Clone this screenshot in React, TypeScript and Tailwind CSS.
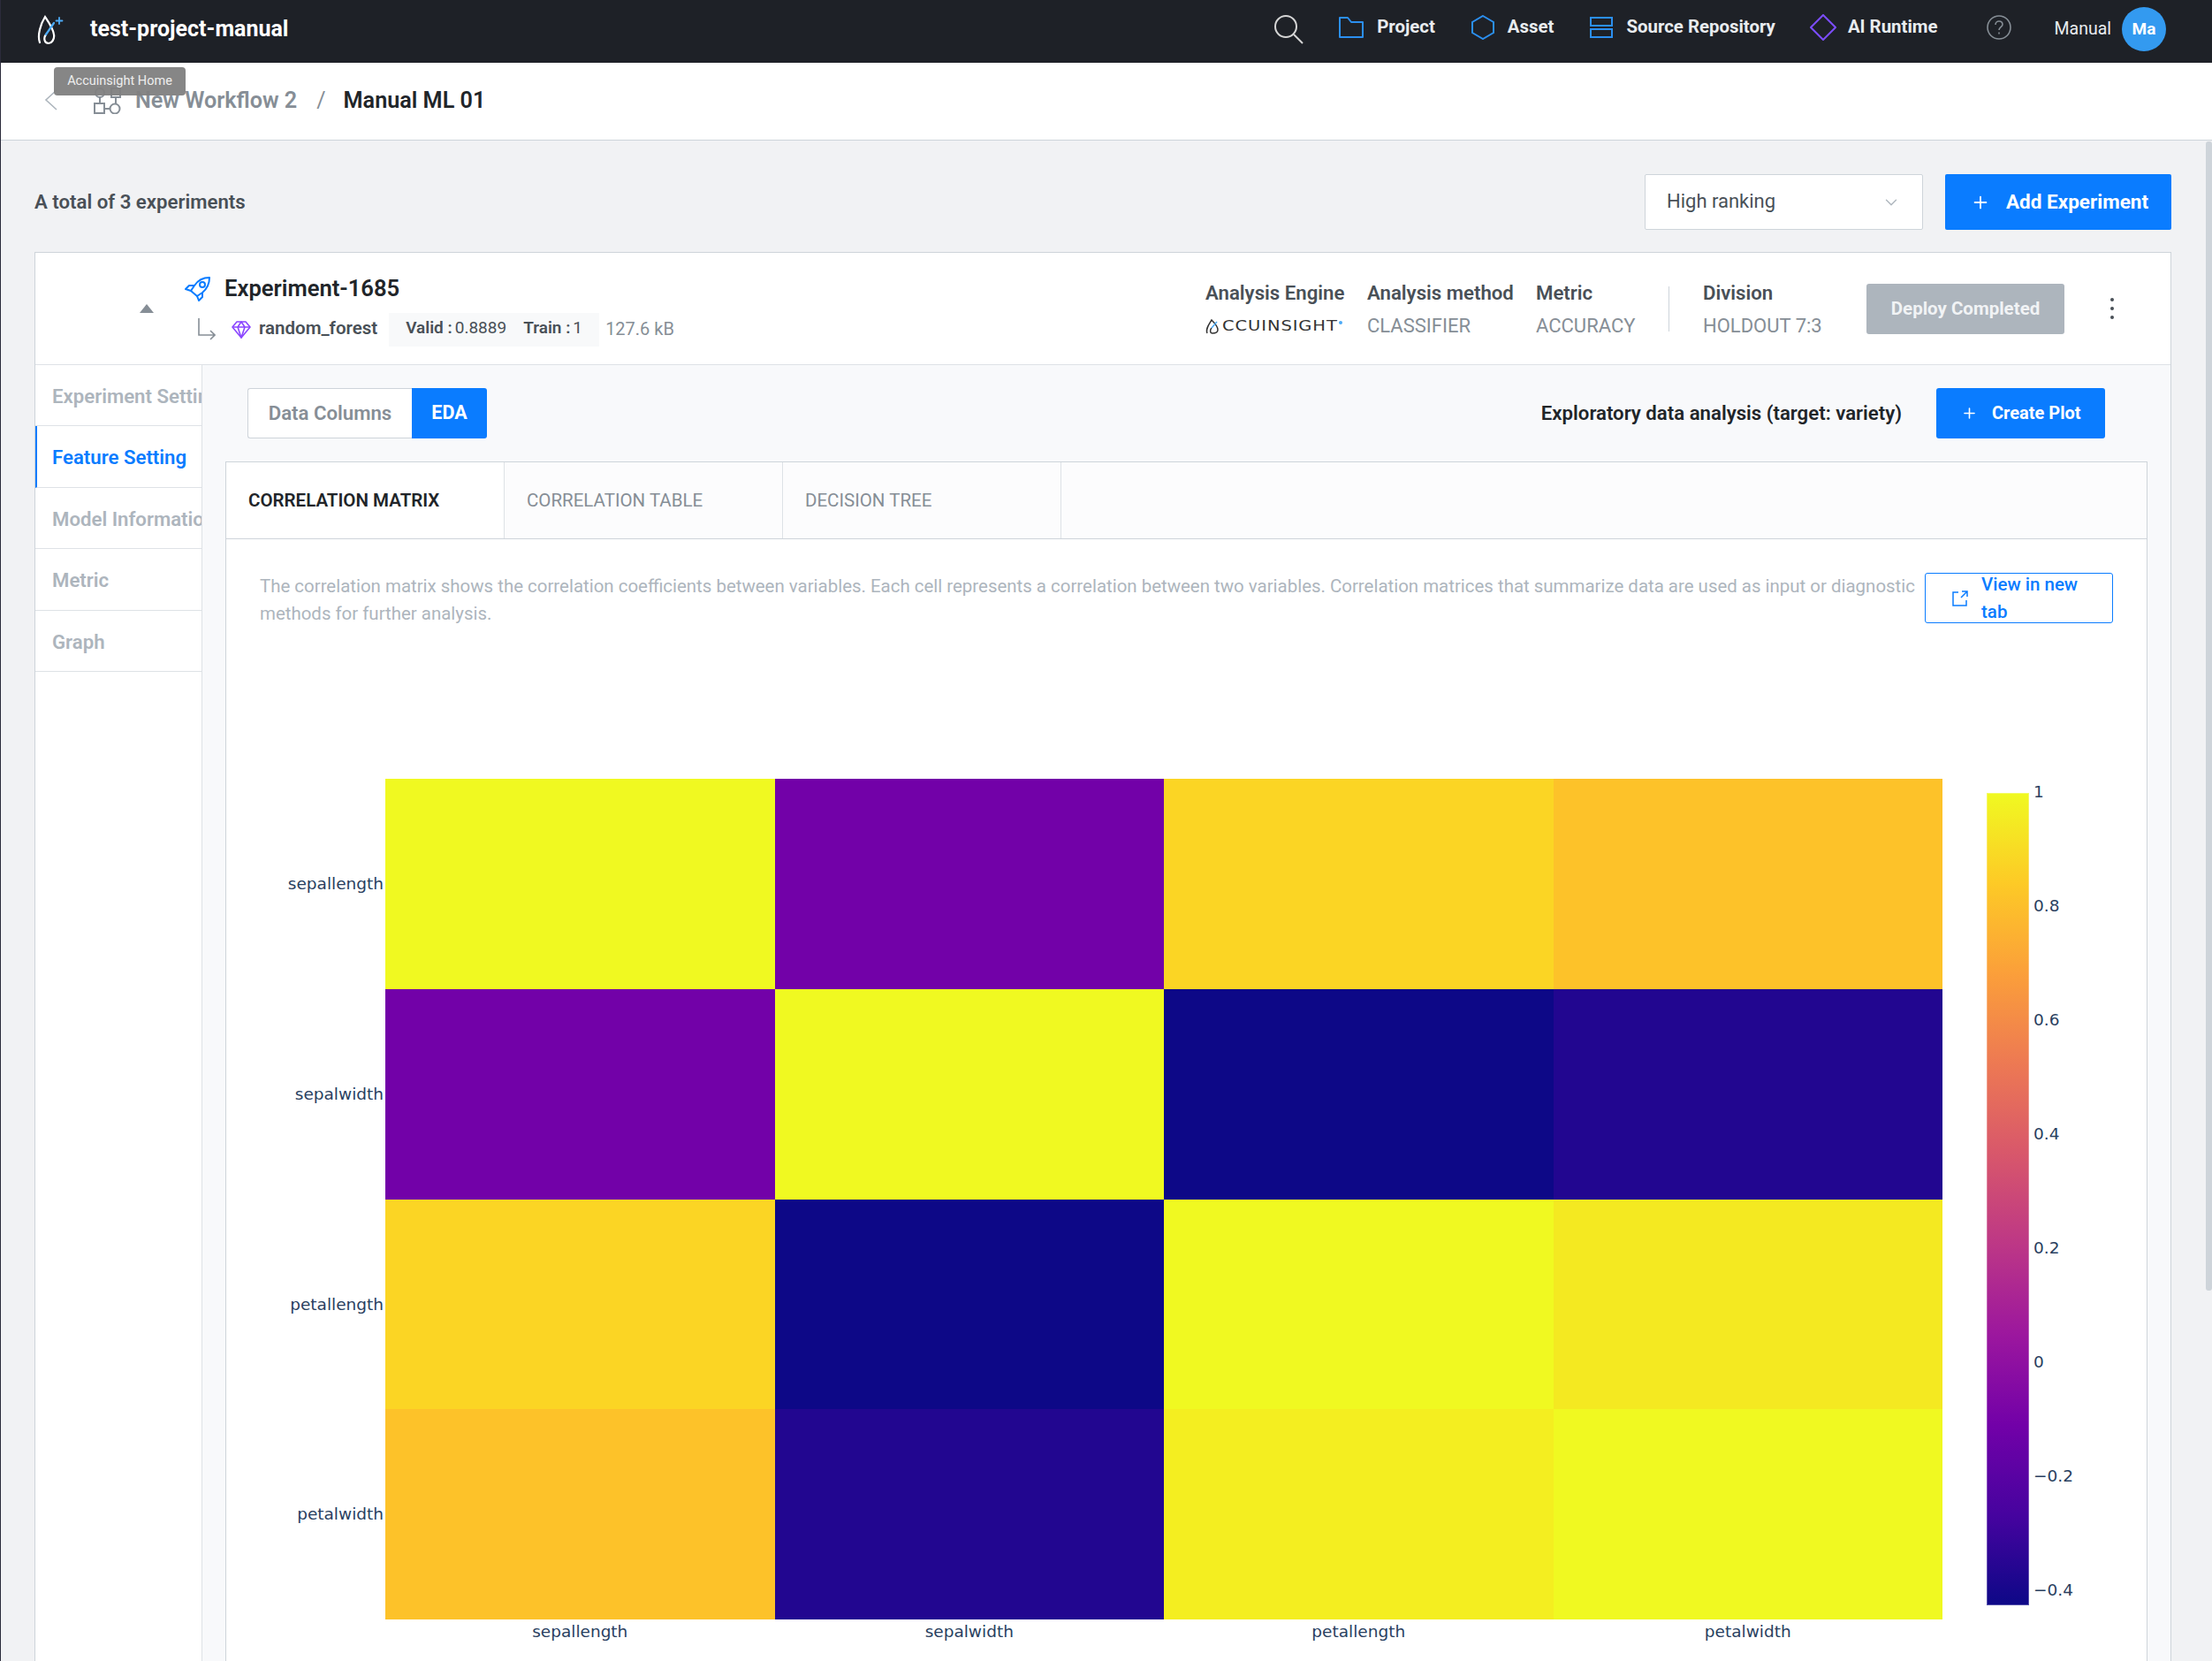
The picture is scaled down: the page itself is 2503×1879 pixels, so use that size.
import { ChevronDown, Plus } from 'lucide-react'

const labels = ['sepallength', 'sepalwidth', 'petallength', 'petalwidth']

const cells = [
  'bg-[#f0f921]', 'bg-[#7201a8]', 'bg-[#fbd524]', 'bg-[#fdc229]',
  'bg-[#7201a8]', 'bg-[#f0f921]', 'bg-[#0d0887]', 'bg-[#220690]',
  'bg-[#fbd524]', 'bg-[#0d0887]', 'bg-[#f0f921]', 'bg-[#f4e921]',
  'bg-[#fdc229]', 'bg-[#220690]', 'bg-[#f4ee20]', 'bg-[#f0f921]',
]

const ticks = ['1', '0.8', '0.6', '0.4', '0.2', '0', '−0.2', '−0.4']

const sideItems = [
  { name: 'Experiment Setting', active: false },
  { name: 'Feature Setting', active: true },
  { name: 'Model Information', active: false },
  { name: 'Metric', active: false },
  { name: 'Graph', active: false },
]

function Logo() {
  return (
    <svg width="32" height="34" viewBox="0 0 32 34" fill="none" strokeWidth="2.2" strokeLinecap="round">
      <path d="M3 31C0 23 4 10 9 2C13 8 18 15 19 22C20 28 16 32 13 32C8 32 7 26 10 22" stroke="#fff" />
      <path d="M10 22L19 9" stroke="#4dabf7" />
      <path d="M25 3V10M21.5 6.5H28.5" stroke="#4dabf7" strokeWidth="1.8" />
    </svg>
  )
}

function NavItem({ icon, label, iconGap }: { icon: React.ReactNode; label: string; iconGap: string }) {
  return (
    <div className={`flex items-center ${iconGap}`}>
      {icon}
      <span className="text-[20.4px] font-bold text-[#e9ecef] -mt-[2px]">{label}</span>
    </div>
  )
}

function TopBar() {
  return (
    <header className="h-[71px] shrink-0 bg-[#1e2127] flex items-center">
      <div className="ml-[41px] -mt-[4px]">
        <Logo />
      </div>
      <span className="ml-[28px] -mt-[6px] text-[25px] font-bold text-white">test-project-manual</span>
      <div className="ml-auto flex items-center">
        <svg className="-mt-[4px]" width="36" height="36" viewBox="0 0 36 36" fill="none" stroke="#d5d5d5" strokeWidth="2">
          <circle cx="14" cy="14" r="12" />
          <path d="M23 23L33 33" />
        </svg>
        <div className="ml-[38px] -mt-[9px]">
          <NavItem
            iconGap="gap-[15px]"
            label="Project"
            icon={
              <svg width="28" height="24" viewBox="0 0 28 24" fill="none" stroke="#2b8ff0" strokeWidth="2">
                <path d="M1 1H10L14 6H27V23H1Z" strokeLinejoin="round" />
              </svg>
            }
          />
        </div>
        <div className="ml-[41px] -mt-[9px]">
          <NavItem
            iconGap="gap-[15px]"
            label="Asset"
            icon={
              <svg width="26" height="28" viewBox="0 0 26 28" fill="none" stroke="#2b8ff0" strokeWidth="2">
                <path d="M13 1L25 8V20L13 27L1 20V8Z" />
              </svg>
            }
          />
        </div>
        <div className="ml-[41px] -mt-[9px]">
          <NavItem
            iconGap="gap-[15px]"
            label="Source Repository"
            icon={
              <svg width="26" height="24" viewBox="0 0 26 24" fill="none" stroke="#2b8ff0" strokeWidth="2">
                <rect x="1" y="1" width="24" height="9" />
                <rect x="1" y="14" width="24" height="9" />
              </svg>
            }
          />
        </div>
        <div className="ml-[39px] -mt-[9px]">
          <NavItem
            iconGap="gap-[13px]"
            label="AI Runtime"
            icon={
              <svg width="30" height="30" viewBox="0 0 30 30" fill="none" stroke="#7c4dff" strokeWidth="2">
                <path d="M15 1L29 15L15 29L1 15Z" />
              </svg>
            }
          />
        </div>
        <svg className="ml-[55px] -mt-[9px]" width="28" height="28" viewBox="0 0 28 28" fill="none" stroke="#868e96" strokeWidth="1.6">
          <circle cx="14" cy="14" r="13" />
          <path d="M10 11C10 8.5 12 7 14 7C16.5 7 18 8.7 18 10.7C18 13.5 14 14 14 17" />
          <path d="M14 19.5V21.5" />
        </svg>
        <span className="ml-[49px] -mt-[6px] text-[19.5px] text-[#e9ecef]">Manual</span>
        <div className="ml-[12px] mr-[52px] -mt-[5px] w-[50px] h-[50px] rounded-full bg-[#339af0] flex items-center justify-center text-[19px] font-bold text-white">
          Ma
        </div>
      </div>
    </header>
  )
}

function Breadcrumb() {
  return (
    <div className="h-[88px] shrink-0 bg-white border-b border-[#ced4da] flex items-center relative">
      <svg className="ml-[49px] -mt-[3px]" width="15" height="24" viewBox="0 0 15 24" fill="none" stroke="#adb5bd" strokeWidth="1.6">
        <path d="M14 1L2 12L14 23" />
      </svg>
      <svg className="ml-[41px] -mt-[1px]" width="31" height="30" viewBox="0 0 31 30" fill="none" stroke="#868e96" strokeWidth="2">
        <circle cx="7" cy="6" r="5" />
        <rect x="20" y="1" width="10" height="10" />
        <rect x="1" y="18" width="11" height="11" />
        <circle cx="24" cy="24" r="5.5" />
        <path d="M7 11V18M25 11V18M12 24H18" />
      </svg>
      <span className="ml-[16px] -mt-[1px] text-[25.2px] font-semibold text-[#868e96]">New Workflow 2</span>
      <span className="ml-[22px] -mt-[1px] text-[25px] text-[#868e96]">/</span>
      <span className="ml-[20px] -mt-[1px] text-[25.2px] font-semibold text-[#212529]">Manual ML 01</span>
      <div className="absolute left-[60px] top-[5px] w-[149px] h-[32px] rounded-[4px] bg-[#7f7f7f]/95 flex items-center justify-center text-[14.5px] text-[#eeeeee]">
        Accuinsight Home
      </div>
    </div>
  )
}

function MetaColumn({ title, value, className }: { title: string; value: string; className: string }) {
  return (
    <div className={`mt-[2px] ${className}`}>
      <div className="text-[22.2px] font-semibold text-[#495057] leading-[30px]">{title}</div>
      <div className="mt-[8px] text-[22px] text-[#868e96] leading-[30px]">{value}</div>
    </div>
  )
}

function ExperimentHeader() {
  return (
    <div className="h-[127px] shrink-0 border-b border-[#dee2e6] flex items-center">
      <div className="ml-[118px] w-0 h-0 border-x-[8px] border-x-transparent border-b-[10px] border-b-[#868e96]" />
      <div className="ml-[35px] flex flex-col">
        <div className="flex items-center h-[40px]">
          <svg width="32" height="30" viewBox="0 0 32 30" fill="none" stroke="#0a7cff" strokeWidth="2" strokeLinejoin="round">
            <path d="M28 2C22 2 15 5 11 11L7 17L14 23L20 19C26 14 28 8 28 2Z" />
            <circle cx="20" cy="10" r="3" />
            <path d="M11 11H5L1 15L7 17M20 19V24L16 28L14 23" />
          </svg>
          <span className="ml-[13px] text-[25.6px] font-semibold text-[#212529]">Experiment-1685</span>
        </div>
        <div className="flex items-center h-[38px] mt-[7px]">
          <svg className="ml-[15px]" width="20" height="26" viewBox="0 0 20 26" fill="none" stroke="#868e96" strokeWidth="1.6">
            <path d="M1 0V19H19M14 14L19 19L14 24" />
          </svg>
          <svg className="ml-[18px]" width="22" height="20" viewBox="0 0 22 20" fill="none" stroke="#8b46ff" strokeWidth="1.6" strokeLinejoin="round">
            <path d="M6 1H16L21 7L11 19L1 7Z" />
            <path d="M1 7H21M7 7L11 19L15 7L11 1L7 7" />
          </svg>
          <span className="ml-[9px] text-[20.5px] font-semibold text-[#495057] -mt-[2px]">random_forest</span>
          <div className="ml-[13px] h-[38px] w-[238px] bg-[#f8f9fa] flex items-center pl-[19px] text-[19px] text-[#495057]">
            <span className="font-semibold -mt-[2px]">Valid :</span>
            <span className="ml-[3px] -mt-[2px]">0.8889</span>
            <span className="ml-[19px] font-semibold -mt-[2px]">Train :</span>
            <span className="ml-[3px] -mt-[2px]">1</span>
          </div>
          <span className="ml-[7px] -mt-[2px] text-[20px] text-[#868e96]">127.6 kB</span>
        </div>
      </div>
      <div className="ml-auto flex items-center">
        <div className="mt-[2px] w-[183px]">
          <div className="text-[22.2px] font-semibold text-[#495057] leading-[30px]">Analysis Engine</div>
          <div className="mt-[8px] h-[30px] flex items-center">
            <svg className="shrink-0" width="19" height="17" viewBox="0 0 19 17" fill="none" stroke="#333" strokeWidth="1.5">
              <path d="M2 16C0 11 4 6 7 1C10 4 14 8 14 12C14 15 11 16 8 16C5 16 5 12 7 10" />
              <path d="M7 10L13 3" stroke="#4dabf7" />
            </svg>
            <span className="font-['DejaVu_Sans'] inline-block origin-left scale-x-[1.3] text-[15px] tracking-[0.7px] text-[#333] leading-none">CCUINSIGHT</span>
            <span className="ml-[31px] -mt-[9px] w-[4px] h-[4px] rounded-full bg-[#4dabf7]" />
          </div>
        </div>
        <MetaColumn className="w-[191px]" title="Analysis method" value="CLASSIFIER" />
        <MetaColumn className="w-[150px]" title="Metric" value="ACCURACY" />
        <div className="w-px h-[51px] bg-[#ced4da]" />
        <MetaColumn className="ml-[38px] w-[185px]" title="Division" value="HOLDOUT 7:3" />
        <div className="w-[224px] h-[57px] rounded-[3px] bg-[#adb5bd] flex items-center justify-center text-[20.5px] font-bold text-[#f1f3f5]">
          Deploy Completed
        </div>
        <svg className="ml-[52px] mr-[64px]" width="4" height="24" viewBox="0 0 4 24" fill="#495057">
          <circle cx="2" cy="2" r="2" />
          <circle cx="2" cy="12" r="2" />
          <circle cx="2" cy="22" r="2" />
        </svg>
      </div>
    </div>
  )
}

function Sidebar() {
  return (
    <aside className="w-[189px] shrink-0 border-r border-[#dee2e6] bg-white">
      {sideItems.map((item) => (
        <div
          key={item.name}
          className={`h-[69.4px] border-b border-[#dee2e6] flex items-center overflow-hidden whitespace-nowrap pt-[3px] text-[22.2px] font-semibold ${
            item.active ? 'text-[#0a7cff] border-l-2 border-l-[#0a7cff] pl-[17px]' : 'text-[#adb5bd] pl-[19px]'
          }`}
        >
          {item.name}
        </div>
      ))}
    </aside>
  )
}

function Chart() {
  return (
    <div className="mt-[171px] flex items-start font-['DejaVu_Sans'] text-[18.5px] text-[#2a3f5f]">
      <div className="w-[178px] h-[951px] shrink-0 grid grid-rows-4">
        {labels.map((l) => (
          <div key={l} className="flex items-center justify-end">
            {l}
          </div>
        ))}
      </div>
      <div className="ml-[2px] w-[1762px] shrink-0">
        <div className="h-[951px] grid grid-cols-4 grid-rows-4">
          {cells.map((c, i) => (
            <div key={i} className={c} />
          ))}
        </div>
        <div className="grid grid-cols-4">
          {labels.map((l) => (
            <div key={l} className="text-center">
              {l}
            </div>
          ))}
        </div>
      </div>
      <div className="ml-[50px] mt-[16px] w-[48px] h-[919px] shrink-0 border border-[#ffffff4d] bg-origin-border bg-[linear-gradient(to_top,#0d0887,#46039f,#7201a8,#9c179e,#bd3786,#d8576b,#ed7953,#fb9f3a,#fdca26,#f0f921)]" />
      <div className="ml-[5px] -mt-[50px]">
        {ticks.map((t) => (
          <div key={t} className="h-[129px] flex items-center">
            {t}
          </div>
        ))}
      </div>
    </div>
  )
}

function EdaPanel() {
  return (
    <main className="flex-1 min-w-0 bg-[#f8f9fb] pt-[26px] pl-[26px] pr-[26px]">
      <div className="flex items-center h-[57px]">
        <div className="flex h-[57px] ml-[25px]">
          <div className="w-[186px] pt-[1px] border border-r-0 border-[#ced4da] bg-white rounded-l-[3px] flex items-center justify-center text-[22.2px] font-semibold text-[#868e96]">
            Data Columns
          </div>
          <div className="w-[85px] bg-[#0a7cff] rounded-r-[3px] flex items-center justify-center text-[21.5px] font-bold text-white">
            EDA
          </div>
        </div>
        <span className="ml-auto text-[22.2px] font-semibold text-[#212529]">Exploratory data analysis (target: variety)</span>
        <div className="ml-[39px] mr-[48px] w-[191px] h-[57px] rounded-[3px] bg-[#0a7cff] flex items-center text-[20px] font-bold text-white">
          <Plus size={19} className="ml-[28px]" strokeWidth={2} />
          <span className="ml-[16px] -mt-[2px]">Create Plot</span>
        </div>
      </div>
      <div className="mt-[26px] border-x border-t border-[#ced4da] bg-white h-[1500px]">
        <div className="h-[87px] flex border-b border-[#ced4da] bg-[#fcfcfd] text-[20.5px]">
          <div className="w-[315px] bg-white border-r border-[#dee2e6] flex items-center pl-[25px] font-semibold text-[#212529]">
            CORRELATION MATRIX
          </div>
          <div className="w-[315px] border-r border-[#dee2e6] flex items-center pl-[25px] text-[#868e96]">
            CORRELATION TABLE
          </div>
          <div className="w-[315px] border-r border-[#dee2e6] flex items-center pl-[25px] text-[#868e96]">
            DECISION TREE
          </div>
        </div>
        <div className="pt-[38px]">
          <div className="flex items-start pl-[38px] pr-[38px]">
            <p className="flex-1 min-w-0 text-[20.45px] leading-[31px] text-[#adb5bd]">
              The correlation matrix shows the correlation coefficients between variables. Each cell represents a correlation between two variables. Correlation matrices that summarize data are used as input or diagnostic methods for further analysis.
            </p>
            <div className="ml-[9px] w-[213px] h-[57px] shrink-0 rounded-[3px] border border-[#0a7cff] flex items-center text-[20.5px] font-medium leading-[31px] text-[#0a7cff]">
              <svg className="ml-[30px] shrink-0" width="18" height="18" viewBox="0 0 18 18" fill="none" stroke="#0a7cff" strokeWidth="1.5">
                <path d="M7 2H1V17H16V11M10 8L17 1M11 1H17V7" />
              </svg>
              <span className="ml-[15px]">
                View in new
                <br />
                tab
              </span>
            </div>
          </div>
          <Chart />
        </div>
      </div>
    </main>
  )
}

export default function App() {
  return (
    <div className="relative h-[1879px] overflow-hidden flex flex-col border-l border-[#2b2b3b] bg-[#f1f2f4] font-['Roboto']">
      <TopBar />
      <Breadcrumb />
      <div className="flex-1 min-h-0 pl-[38px] pr-[46px]">
        <div className="h-[126px] flex items-start justify-between pt-[38px]">
          <span className="text-[22.2px] font-semibold text-[#495057] leading-[63px]">A total of 3 experiments</span>
          <div className="flex items-center gap-[25px]">
            <div className="w-[315px] h-[63px] bg-white border border-[#ced4da] rounded-[2px] flex items-center justify-between pl-[24px] pr-[24px] text-[22px] text-[#495057]">
              <span className="-mt-[2px]">High ranking</span>
              <ChevronDown size={22} className="text-[#adb5bd]" strokeWidth={1.5} />
            </div>
            <div className="w-[256px] h-[63px] bg-[#0a7cff] rounded-[2px] flex items-center text-[22.5px] font-bold text-white">
              <Plus size={22} className="ml-[29px]" strokeWidth={2} />
              <span className="ml-[18px]">Add Experiment</span>
            </div>
          </div>
        </div>
        <section className="bg-white border border-[#ced4da] h-[1700px] flex flex-col">
          <ExperimentHeader />
          <div className="flex flex-1 min-h-0">
            <Sidebar />
            <EdaPanel />
          </div>
        </section>
      </div>
      <div className="absolute right-0 top-[160px] w-[7px] h-[1300px] bg-[#ced4da] rounded-[3px]" />
    </div>
  )
}
